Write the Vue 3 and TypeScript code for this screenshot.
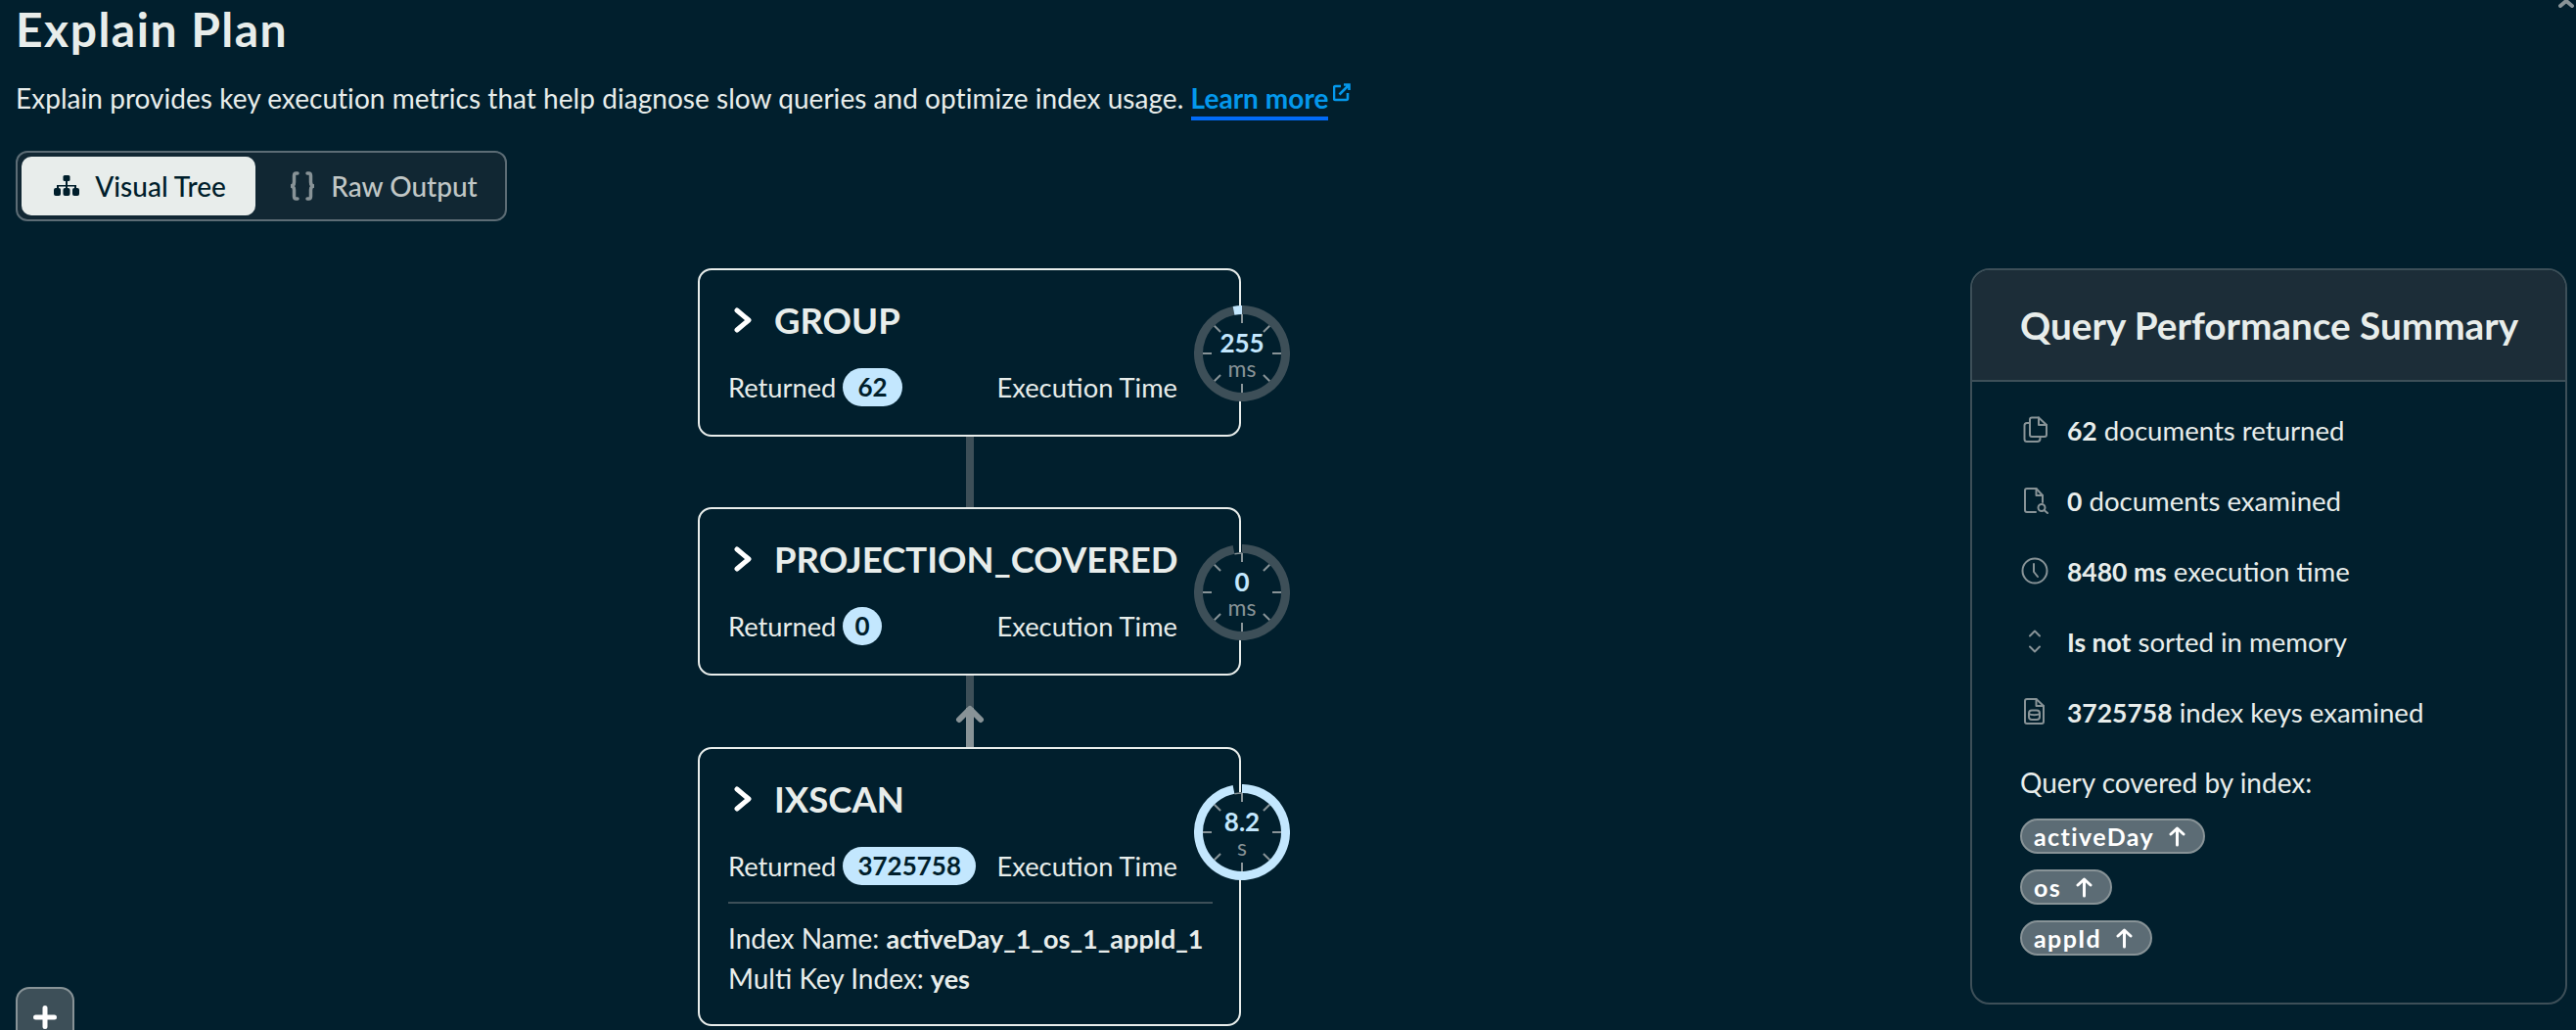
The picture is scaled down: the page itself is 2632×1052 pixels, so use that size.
<script setup lang="ts">
interface Gauge { value: string; unit: string; base: string; progress: string; capped: boolean }
interface PlanNode { title: string; returned: string; gauge: Gauge; details?: { label: string; value: string }[] }

const cx = 49
const cy = 49
const r = 44.5
function polar(deg: number, radius = r) {
  const a = ((deg - 90) * Math.PI) / 180
  return { x: cx + radius * Math.cos(a), y: cy + radius * Math.sin(a) }
}
function arc(from: number, to: number, radius = r) {
  const s = polar(from, radius)
  const e = polar(to, radius)
  const large = to - from > 180 ? 1 : 0
  return `M${s.x.toFixed(2)} ${s.y.toFixed(2)}A${radius} ${radius} 0 ${large} 1 ${e.x.toFixed(2)} ${e.y.toFixed(2)}`
}
const ticks = [0, 45, 90, 135, 180, 225, 270, 315]
const gapEdge = arc(349, 360, 40)

const nodes: PlanNode[] = [
  { title: 'GROUP', returned: '62', gauge: { value: '255', unit: 'ms', base: arc(0, 349), progress: arc(349, 360), capped: false } },
  { title: 'PROJECTION_COVERED', returned: '0', gauge: { value: '0', unit: 'ms', base: arc(0, 349), progress: '', capped: true } },
  {
    title: 'IXSCAN',
    returned: '3725758',
    gauge: { value: '8.2', unit: 's', base: '', progress: arc(0, 349), capped: true },
    details: [
      { label: 'Index Name:', value: 'activeDay_1_os_1_appId_1' },
      { label: 'Multi Key Index:', value: 'yes' }
    ]
  }
]

const stats = [
  { icon: 'copy', strong: '62', rest: 'documents returned' },
  { icon: 'search', strong: '0', rest: 'documents examined' },
  { icon: 'clock', strong: '8480 ms', rest: 'execution time' },
  { icon: 'sort', strong: 'Is not', rest: 'sorted in memory' },
  { icon: 'index', strong: '3725758', rest: 'index keys examined' }
]
const indexKeys = ['activeDay', 'os', 'appId']
</script>

<template>
  <div class="page">
    <svg class="corner" width="18" height="8" viewBox="0 0 18 8"><path d="M2 6 8 1l6 5" fill="none" stroke="#889397" stroke-width="4" stroke-linecap="round" /></svg>

    <header class="head">
      <h1 class="title">Explain Plan</h1>
      <p class="desc">
        Explain provides key execution metrics that help diagnose slow queries and optimize index usage.
        <a class="link">Learn more</a>
        <svg class="ext" width="18" height="19" viewBox="0 0 18 19" fill="none" stroke="#0498ec" stroke-width="2.6">
          <path d="M8 3H2.500A1.500 1.500 0 0 0 1 4.500v11A1.500 1.500 0 0 0 2.500 17h11a1.500 1.500 0 0 0 1.500-1.500V10" />
          <path d="M6.500 11.500 16 2M11 1.500h5.500V7" />
        </svg>
      </p>
      <div class="seg">
        <button class="seg-btn active">
          <svg width="28" height="22" viewBox="0 0 28 22" fill="#001e2b">
            <rect x="10.500" y="0" width="7" height="6" rx="1.500" />
            <path d="M13 6h2v4h9v3h-2v-1.500h-7V13h-2v-1.500H6V13H4v-3h9z" />
            <rect x="1" y="13" width="7" height="8" rx="2" /><rect x="10.500" y="13" width="7" height="8" rx="2" /><rect x="20" y="13" width="7" height="8" rx="2" />
          </svg>
          Visual Tree
        </button>
        <button class="seg-btn">
          <svg width="28" height="30" viewBox="0 0 28 30" fill="none" stroke="#889397" stroke-width="3.500" stroke-linecap="round">
            <path d="M9 2H7.500C6 2 5.500 3 5.500 4.500V11C5.500 13 4.500 15 2 15c2.500 0 3.500 2 3.500 4v6.500C5.500 27 6 28 7.500 28H9" />
            <path d="M19 2h1.500C22 2 22.500 3 22.500 4.500V11c0 2 1 4 3.500 4-2.500 0-3.500 2-3.500 4v6.500c0 1.500-.5 2.500-2 2.500H19" />
          </svg>
          Raw Output
        </button>
      </div>
    </header>

    <section class="graph">
      <template v-for="(node, i) in nodes" :key="node.title">
        <div v-if="i === 1" class="link-line"></div>
        <div v-if="i === 2" class="link-line arrowed">
          <svg class="arrow" width="34" height="20" viewBox="0 0 34 20"><path d="M6 16 17 5l11 11" fill="none" stroke="#889397" stroke-width="6" stroke-linecap="round" stroke-linejoin="round" /></svg>
        </div>
        <article class="node" :class="{ big: node.details }">
          <div class="node-title">
            <svg width="18" height="26" viewBox="0 0 18 26"><path d="M3 3 15 13 3 23" fill="none" stroke="#fff" stroke-width="5" stroke-linecap="round" stroke-linejoin="round" /></svg>
            <span>{{ node.title }}</span>
          </div>
          <div class="node-row">
            <span class="ret">Returned</span>
            <span class="count" :class="{ single: node.returned.length === 1 }">{{ node.returned }}</span>
            <span class="exec">Execution Time</span>
          </div>
          <div v-if="node.details" class="details">
            <div v-for="d in node.details" :key="d.label" class="detail">{{ d.label }} <b>{{ d.value }}</b></div>
          </div>
          <div class="gauge">
            <svg width="98" height="98" viewBox="0 0 98 98" fill="none">
              <circle cx="49" cy="49" r="41" fill="#011f2d" />
              <line v-for="t in ticks" :key="t" x1="49" y1="9" x2="49" y2="18" stroke="#889397" stroke-width="2" :transform="`rotate(${t} 49 49)`" />
              <path v-if="node.gauge.capped" :d="gapEdge" stroke="#889397" stroke-width="1.500" />
              <path v-if="node.gauge.base" :d="node.gauge.base" stroke="#3d4f58" stroke-width="9" />
              <path v-if="node.gauge.progress" :d="node.gauge.progress" stroke="#c3e7fe" stroke-width="9" />
            </svg>
            <div class="g-val">{{ node.gauge.value }}</div>
            <div class="g-unit">{{ node.gauge.unit }}</div>
          </div>
        </article>
      </template>
    </section>

    <aside class="panel">
      <div class="panel-head">Query Performance Summary</div>
      <div class="panel-body">
        <div v-for="s in stats" :key="s.icon" class="stat">
          <svg class="stat-icon" width="30" height="30" viewBox="0 0 30 30" fill="none" stroke="#889397" stroke-width="2" stroke-linecap="round" stroke-linejoin="round">
            <template v-if="s.icon === 'copy'">
              <path d="M9 4.500a2 2 0 0 1 2-2h7l8 7.500v10a2 2 0 0 1-2 2H11a2 2 0 0 1-2-2z" />
              <path d="M18 2.500V10h8" />
              <path d="M9 8H6a2.500 2.500 0 0 0-2.500 2.500v14A2.500 2.500 0 0 0 6 27h10.500a3 3 0 0 0 3-3v-2" />
            </template>
            <template v-else-if="s.icon === 'search'">
              <path d="M15 27H6a2 2 0 0 1-2-2V5a2 2 0 0 1 2-2h9.500L22 10v7" /><path d="M15.500 3v7H22" />
              <circle cx="21" cy="22.500" r="3.500" /><path d="m23.500 25 3.500 3" />
            </template>
            <template v-else-if="s.icon === 'clock'">
              <circle cx="14" cy="15" r="12.500" /><path d="M13 8v8l4 5" />
            </template>
            <template v-else-if="s.icon === 'sort'">
              <path d="m9 9.500 5-5 5 5M9 20.500l5 5 5-5" />
            </template>
            <template v-else>
              <path d="M6 2h9.500L23 9v16a2 2 0 0 1-2 2H6a2 2 0 0 1-2-2V4a2 2 0 0 1 2-2z" /><path d="M15.500 2v7H23" />
              <rect x="8" y="13.500" width="11" height="9.500" rx="3" /><path d="M8 17c2 1.500 9 1.500 11 0" />
            </template>
          </svg>
          <span class="stat-text"><b>{{ s.strong }}</b> {{ s.rest }}</span>
        </div>
        <div class="covered">Query covered by index:</div>
        <div class="keys">
          <span v-for="k in indexKeys" :key="k" class="key">
            {{ k }}
            <svg width="17" height="22" viewBox="0 0 17 22" fill="none" stroke="#fff" stroke-width="3" stroke-linecap="round" stroke-linejoin="round"><path d="M8.500 20V3M2 9l6.500-6 6.500 6" /></svg>
          </span>
        </div>
      </div>
    </aside>

    <button class="plus">
      <svg width="24" height="24" viewBox="0 0 24 24"><path d="M12 2.500v19M2.500 12h19" stroke="#fff" stroke-width="5" stroke-linecap="round" /></svg>
    </button>
  </div>
</template>

<style>
html, body { margin: 0; background: #011f2d; }
</style>

<style scoped>
.page {
  position: relative;
  width: 2632px;
  height: 1052px;
  overflow: hidden;
  background: #011f2d;
  color: #e8edeb;
  font-family: Lato, "Noto Sans", sans-serif;
}
.corner { position: absolute; right: 0; top: 0; }
.head { padding-left: 16px; }
.title { margin: -1px 0 1px; height: 62px; font-size: 48px; line-height: 62px; font-weight: 700; letter-spacing: 1.500px; }
.desc { margin: 0; height: 92px; font-size: 28px; letter-spacing: 0.040px; line-height: 76px; display: block; position: relative; }
.link { color: #0498ec; font-weight: 700; border-bottom: 4px solid #016bf8; padding-bottom: 2px; }
.ext { vertical-align: 7px; margin-left: 5px; }
.seg {
  display: inline-flex;
  box-sizing: border-box;
  width: 502px;
  height: 72px;
  padding: 4px;
  gap: 4px;
  background: #112733;
  border: 2px solid #5c6c75;
  border-radius: 12px;
}
.seg-btn {
  flex: 0 0 auto;
  box-sizing: border-box;
  width: 239px;
  display: flex;
  align-items: center;
  justify-content: center;
  gap: 15px;
  padding: 0 0 0 14px;
  border: 0;
  border-radius: 10px;
  background: transparent;
  color: #c1c7c6;
  font: 500 28px Lato, "Noto Sans", sans-serif;
}
.seg-btn.active { padding: 0 0 0 2px; background: #e8edeb; color: #001e2b; }
.graph {
  position: absolute;
  left: 713px;
  top: 274px;
  width: 555px;
  display: flex;
  flex-direction: column;
}
.node {
  position: relative;
  box-sizing: border-box;
  height: 172px;
  padding: 31px 0 0 29px;
  border: 2px solid #e8edeb;
  border-radius: 14px;
  background: #011f2d;
}
.node.big { height: 285px; }
.node-title {
  display: flex;
  align-items: center;
  gap: 23px;
  padding-left: 6px;
  height: 40px;
  font-size: 36.500px;
  font-weight: 700;
  white-space: nowrap;
}
.node-row {
  display: flex;
  align-items: center;
  height: 40px;
  margin-top: 28px;
  font-size: 27.300px;
  white-space: nowrap;
}
.count {
  margin-left: 7px;
  padding: 0 15px;
  height: 39px;
  line-height: 39px;
  background: #c3e7fe;
  color: #001e2b;
  border-radius: 20px;
  font-size: 26px;
  font-weight: 700;
}
.count.single { padding: 0 12px; }
.exec { position: absolute; right: 63px; }
.details {
  margin: 17px 27px 0 0;
  padding-top: 15px;
  border-top: 2px solid #3d4f58;
  font-size: 28px;
  line-height: 40px;
  white-space: nowrap;
}
.details b { font-size: 27px; }
.gauge {
  position: absolute;
  right: -52px;
  top: 36px;
  width: 98px;
  height: 98px;
  text-align: center;
}
.gauge svg { position: absolute; left: 0; top: 0; }
.g-val {
  position: absolute;
  left: 0;
  right: 0;
  top: 22px;
  font-size: 26px;
  line-height: 32px;
  font-weight: 700;
  color: #c3e7fe;
}
.g-unit {
  position: absolute;
  left: 0;
  right: 0;
  top: 51px;
  font-size: 23px;
  line-height: 26px;
  color: #889397;
}
.link-line {
  position: relative;
  width: 8px;
  height: 72px;
  margin-left: 274px;
  background: #3d4f58;
}
.link-line.arrowed {
  height: 73px;
  background: linear-gradient(#3d4f58 0 33px, #889397 33px);
}
.arrow { position: absolute; left: -13px; top: 29px; }
.panel {
  position: absolute;
  left: 2013px;
  top: 274px;
  width: 610px;
  height: 752px;
  box-sizing: border-box;
  border: 2px solid #3d4f58;
  border-radius: 20px;
  overflow: hidden;
}
.panel-head {
  height: 114px;
  box-sizing: border-box;
  padding-left: 49px;
  line-height: 112px;
  background: #1c2d38;
  border-bottom: 2px solid #3d4f58;
  font-size: 38.700px;
  font-weight: 700;
}
.panel-body { padding: 13px 0 0 49px; }
.stat { display: flex; align-items: center; height: 72px; font-size: 27.600px; }
.stat b { font-size: 26.500px; }
.stat-icon { margin-left: 1px; margin-right: 17px; }
.covered { height: 72px; line-height: 72px; font-size: 28px; }
.keys { display: flex; flex-direction: column; align-items: flex-start; gap: 16px; margin-top: 1px; }
.key {
  display: inline-flex;
  align-items: center;
  gap: 15px;
  box-sizing: border-box;
  height: 36px;
  padding: 0 18px 0 12px;
  background: #5c6c75;
  border: 2px solid #889397;
  border-radius: 18px;
  color: #fff;
  font-size: 25px;
  letter-spacing: 1.400px;
  font-weight: 700;
}
.plus {
  position: absolute;
  left: 16px;
  top: 1008px;
  width: 60px;
  height: 60px;
  display: flex;
  align-items: flex-start;
  justify-content: center;
  padding: 17px 0 0;
  box-sizing: border-box;
  background: #3d4f58;
  border: 2px solid #889397;
  border-radius: 14px;
}
</style>
